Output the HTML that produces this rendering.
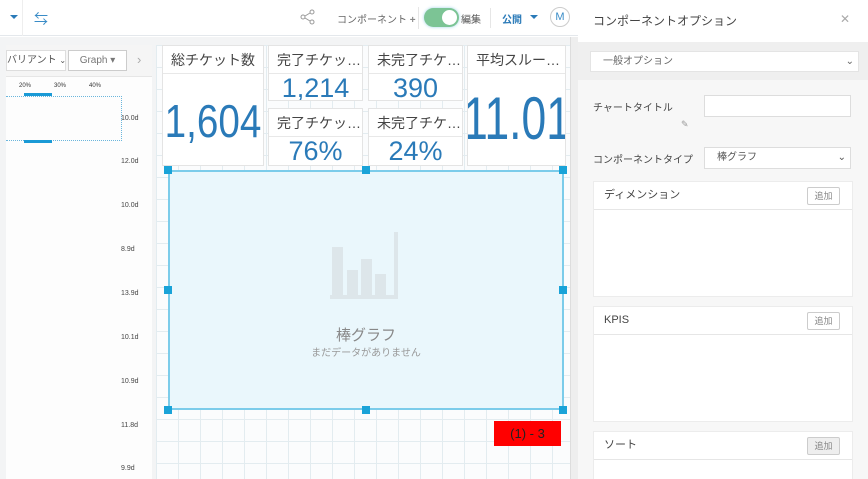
<!DOCTYPE html>
<html><head><meta charset="utf-8"><style>
*{box-sizing:border-box;margin:0;padding:0}
html,body{width:868px;height:479px;overflow:hidden}
body{position:relative;background:#fff;font-family:"Liberation Sans","Noto Sans CJK JP",sans-serif;color:#555}
.a{position:absolute}
.grid{background-color:#fbfcfd;background-image:linear-gradient(#e3ecf0 1px,transparent 1px),linear-gradient(90deg,#e3ecf0 1px,transparent 1px);background-size:22px 22px}
.card{position:absolute;background:#fff;border:1px solid #e4e4e4;overflow:hidden}
.t{font-size:14px;color:#444;padding-left:8px;line-height:28px;white-space:nowrap;border-bottom:1px solid #e8e8e8;height:28px}
.v{color:#2a7ab8;text-align:center;white-space:nowrap}
.big{position:absolute;left:50%;color:#2a7ab8;white-space:nowrap;transform-origin:0 0}
.h{position:absolute;width:8px;height:8px;background:#1aa3d8}
.yl{position:absolute;left:121px;font-size:7px;color:#444}
.pc{position:absolute;left:593px;width:260px;background:#fff;border:1px solid #ececec}
.ph{height:28px;border-bottom:1px solid #e6e6e6;font-size:11px;color:#444;padding-left:10px;line-height:26px;position:relative}
.btn{position:absolute;right:12px;top:5px;width:33px;height:18px;border:1px solid #ccc;font-size:9px;color:#888;text-align:center;line-height:16px;background:#fff;border-radius:2px}
</style></head><body>
<div class="a" style="left:0;top:0;width:578px;height:36px;background:#fff;border-bottom:1px solid #e4e8ec"></div>
<div class="a" style="left:10px;top:15px;border-left:4px solid transparent;border-right:4px solid transparent;border-top:4px solid #2a7ab8"></div>
<div class="a" style="left:22px;top:0;width:1px;height:36px;background:#eee"></div>
<div class="a" style="left:34px;top:9px;font-size:14px;color:#3a8cc7">⇆</div>
<svg class="a" style="left:300px;top:9px" width="16" height="16" viewBox="0 0 16 16"><g fill="none" stroke="#999" stroke-width="1"><circle cx="3" cy="8" r="2"/><circle cx="12" cy="3" r="2"/><circle cx="12" cy="13" r="2"/><path d="M5 7L10 4M5 9L10 12"/></g></svg>
<div class="a" style="left:337px;top:11px;font-size:10px;color:#666">コンポーネント <b style="color:#888">+</b></div>
<div class="a" style="left:418px;top:7px;width:1px;height:22px;background:#e6e6e6"></div>
<div class="a" style="left:424px;top:8px;width:35px;height:19px;border-radius:10px;background:#7cc495;box-shadow:0 0 3px #9fd4e8"></div>
<div class="a" style="left:442px;top:10px;width:15px;height:15px;border-radius:50%;background:#fff"></div>
<div class="a" style="left:461px;top:11px;font-size:10px;color:#555">編集</div>
<div class="a" style="left:490px;top:8px;width:1px;height:20px;background:#e6e6e6"></div>
<div class="a" style="left:502px;top:11px;font-size:10px;color:#2a7ab8;font-weight:bold">公開</div>
<div class="a" style="left:530px;top:15px;border-left:4px solid transparent;border-right:4px solid transparent;border-top:4px solid #2a7ab8"></div>
<div class="a" style="left:550px;top:7px;width:20px;height:20px;border-radius:50%;border:1px solid #ccc;font-size:11px;color:#3a8cc7;text-align:center;line-height:18px">M</div>
<div class="a" style="left:0;top:37px;width:578px;height:442px;background:#f3f4f5"></div>
<div class="a" style="left:6px;top:45px;width:146px;height:434px;background:#fdfdfd"></div>
<div class="a" style="left:6px;top:45px;width:146px;height:32px;background:#f5f5f5;border-bottom:1px solid #e6e6e6"></div>
<div class="a" style="left:6px;top:50px;width:60px;height:21px;background:#fff;border:1px solid #ddd;font-size:10px;color:#555;line-height:19px;white-space:nowrap;overflow:hidden">バリアント <span style="font-size:8px">⌄</span></div>
<div class="a" style="left:68px;top:50px;width:59px;height:21px;background:#fff;border:1px solid #ccc;font-size:10px;color:#777;line-height:19px;text-align:center">Graph ▾</div>
<div class="a" style="left:137px;top:52px;font-size:13px;color:#aaa">›</div>
<div class="a" style="left:19px;top:83px;font-size:6px;color:#333">20%</div>
<div class="a" style="left:54px;top:83px;font-size:6px;color:#333">30%</div>
<div class="a" style="left:89px;top:83px;font-size:6px;color:#333">40%</div>
<div class="a" style="left:6px;top:96px;width:116px;height:45px;border:1px dotted #6bb6dc;border-left:none"></div>
<div class="a" style="left:24px;top:93px;width:28px;height:3px;background:#1a9ad6"></div>
<div class="a" style="left:24px;top:140px;width:28px;height:3px;background:#1a9ad6"></div>
<div class="yl" style="top:115px">10.0d</div><div class="yl" style="top:158px">12.0d</div><div class="yl" style="top:202px">10.0d</div><div class="yl" style="top:246px">8.9d</div><div class="yl" style="top:290px">13.9d</div><div class="yl" style="top:334px">10.1d</div><div class="yl" style="top:378px">10.9d</div><div class="yl" style="top:422px">11.8d</div><div class="yl" style="top:465px">9.9d</div>
<div class="a grid" style="left:156px;top:45px;width:414px;height:434px"></div>
<div class="a" style="left:570px;top:37px;width:8px;height:442px;background:#eee;border-left:1px solid #ddd"></div>
<div class="card" style="left:162px;top:45px;width:102px;height:121px"><div class="t">総チケット数</div><div class="big" style="top:48px;font-size:46px;transform:scaleX(.84) translateX(-50%)">1,604</div></div>
<div class="card" style="left:268px;top:45px;width:95px;height:56px"><div class="t">完了チケッ…</div><div class="v" style="font-size:27px;line-height:28px">1,214</div></div>
<div class="card" style="left:268px;top:108px;width:95px;height:58px"><div class="t">完了チケッ…</div><div class="v" style="font-size:27px;line-height:28px">76%</div></div>
<div class="card" style="left:368px;top:45px;width:95px;height:56px"><div class="t">未完了チケ…</div><div class="v" style="font-size:27px;line-height:28px">390</div></div>
<div class="card" style="left:368px;top:108px;width:95px;height:58px"><div class="t">未完了チケ…</div><div class="v" style="font-size:27px;line-height:28px">24%</div></div>
<div class="card" style="left:467px;top:45px;width:99px;height:121px"><div class="t">平均スルー…</div><div class="big" style="top:38px;font-size:60px;transform:scaleX(.74) translateX(-50%)">11.01</div></div>
<div class="a" style="left:168px;top:170px;width:396px;height:240px;background:#eaf7fc;border:2px solid #7cccea"></div>
<svg class="a" style="left:330px;top:232px" width="68" height="70"><g fill="#dde6ea"><rect x="2" y="15" width="11" height="48"/><rect x="17" y="38" width="11" height="25"/><rect x="31" y="27" width="11" height="36"/><rect x="45" y="42" width="11" height="21"/><rect x="0" y="63" width="68" height="4"/><rect x="64" y="0" width="4" height="67"/></g></svg>
<div class="a" style="left:168px;top:324px;width:396px;text-align:center;font-size:15px;color:#888">棒グラフ</div>
<div class="a" style="left:168px;top:344px;width:396px;text-align:center;font-size:10px;color:#999">まだデータがありません</div>
<div class="h" style="left:164px;top:166px"></div><div class="h" style="left:362px;top:166px"></div><div class="h" style="left:559px;top:166px"></div>
<div class="h" style="left:164px;top:286px"></div><div class="h" style="left:559px;top:286px"></div>
<div class="h" style="left:164px;top:406px"></div><div class="h" style="left:362px;top:406px"></div><div class="h" style="left:559px;top:406px"></div>
<div class="a" style="left:494px;top:421px;width:67px;height:25px;background:#f00;color:#222;font-size:13px;text-align:center;line-height:25px">(1) - 3</div>
<div class="a" style="left:578px;top:0;width:290px;height:479px;background:#f7f7f7"></div>
<div class="a" style="left:578px;top:0;width:290px;height:42px;background:#fff"></div>
<div class="a" style="left:593px;top:12px;font-size:12px;color:#444">コンポーネントオプション</div>
<div class="a" style="left:840px;top:12px;font-size:12px;color:#aaa">✕</div>
<div class="a" style="left:578px;top:42px;width:290px;height:38px;background:#efefef"></div>
<div class="a" style="left:590px;top:51px;width:269px;height:21px;background:#fff;border:1px solid #e4e4e4;font-size:10px;color:#666;line-height:19px;padding-left:12px">一般オプション<span style="position:absolute;right:4px;font-size:10px">⌄</span></div>
<div class="a" style="left:593px;top:99px;font-size:10px;color:#444">チャートタイトル</div>
<div class="a" style="left:704px;top:95px;width:147px;height:22px;background:#fff;border:1px solid #ddd"></div>
<div class="a" style="left:681px;top:119px;font-size:9px;color:#999">✎</div>
<div class="a" style="left:593px;top:151px;font-size:10px;color:#444">コンポーネントタイプ</div>
<div class="a" style="left:704px;top:147px;width:147px;height:22px;background:#fff;border:1px solid #ddd;font-size:10px;color:#555;line-height:20px;padding-left:12px">棒グラフ<span style="position:absolute;right:4px">⌄</span></div>
<div class="pc" style="top:181px;height:116px"><div class="ph">ディメンション<div class="btn">追加</div></div></div>
<div class="pc" style="top:306px;height:116px"><div class="ph">KPIS<div class="btn">追加</div></div></div>
<div class="pc" style="top:431px;height:48px;border-bottom:none"><div class="ph">ソート<div class="btn" style="background:#eee">追加</div></div></div>
</body></html>
